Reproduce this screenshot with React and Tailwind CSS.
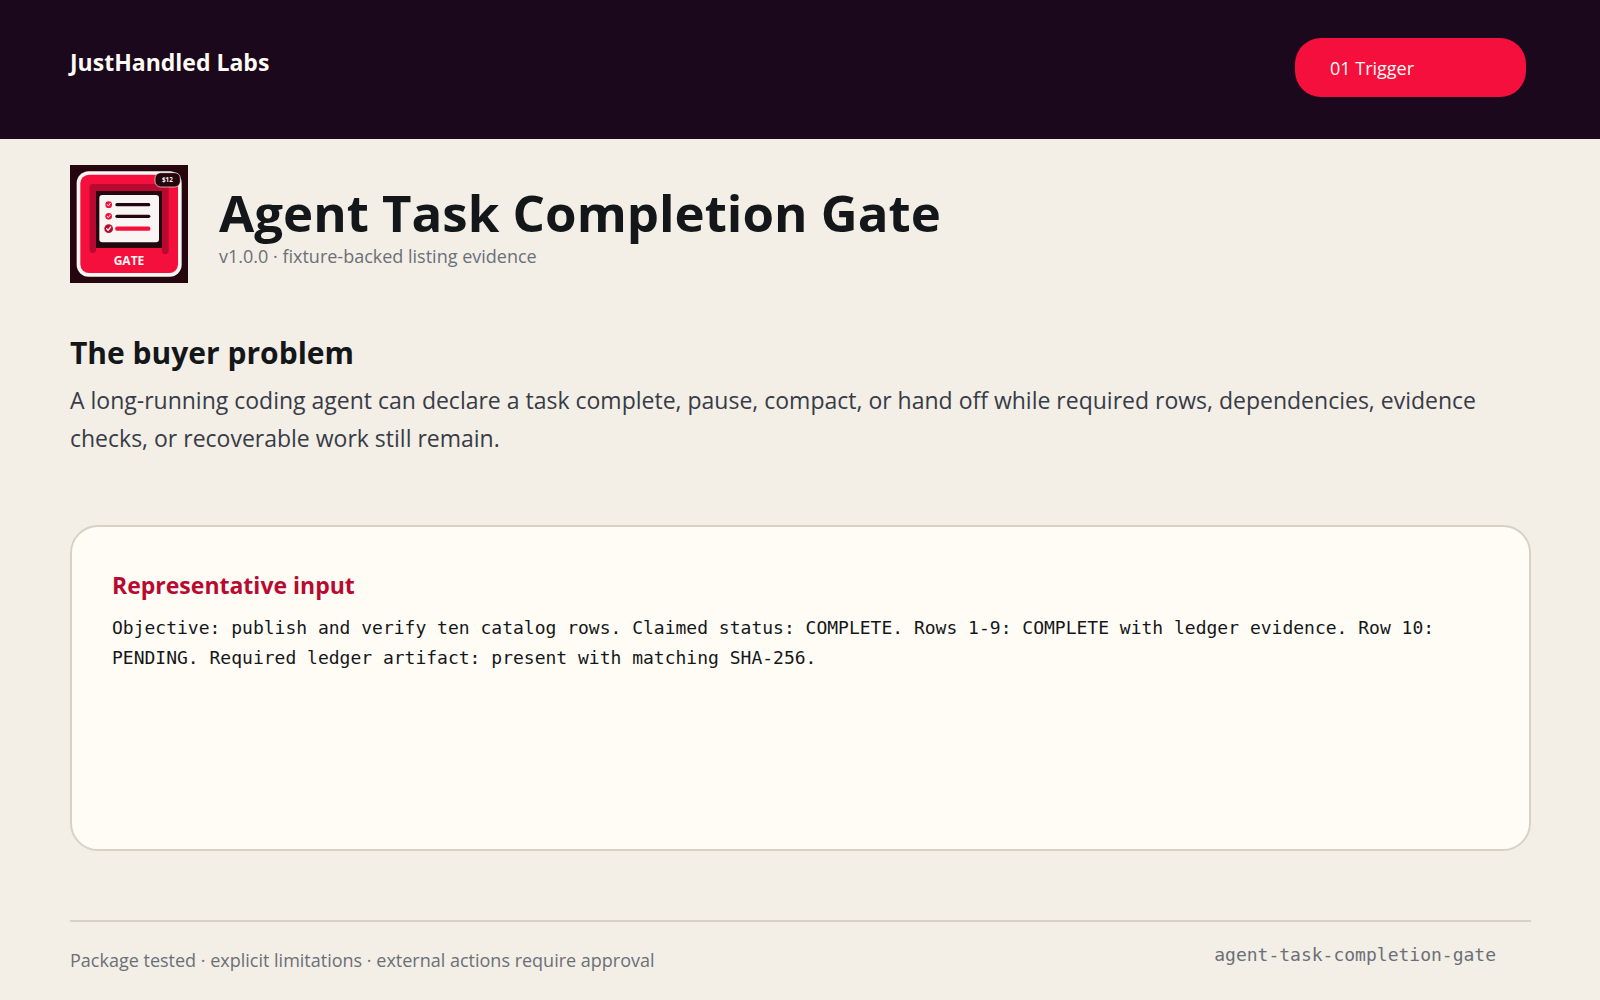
import React from 'react';

const GateLogo = () => (
  <svg viewBox="0 0 354 354" className="size-[118px] shrink-0" role="img" aria-label="Gate">
    <rect width="354" height="354" fill="#26060e" />
    <rect x="20" y="19" width="315" height="316" rx="36" fill="#f9f5f2" />
    <rect x="31" y="29" width="293" height="295" rx="26" fill="#f50f3c" />
    {/* gate frame */}
    <path d="M59 67 Q59 57 69 57 H286 Q296 57 296 67 V257 a10 10 0 0 1 -20 0 V78 H78 V257 a10 10 0 0 1 -19 0 Z" fill="#b80a30" />
    <rect x="78" y="78" width="198" height="171" fill="#26060e" />
    {/* checklist */}
    <rect x="88" y="90" width="179" height="142" rx="9" fill="#f9f5f2" />
    <circle cx="116" cy="119" r="10" fill="#f50f3c" />
    <circle cx="116" cy="154" r="10" fill="#f50f3c" />
    <circle cx="116" cy="191" r="13" fill="#b80a30" />
    <g fill="none" stroke="#f9f5f2" strokeWidth="3" strokeLinecap="round" strokeLinejoin="round">
      <path d="M112 119 l3 4 l6 -8" />
      <path d="M112 154 l3 4 l6 -8" />
      <path d="M110 191 l4 5 l8 -10" strokeWidth="4" />
    </g>
    <g strokeLinecap="round" strokeWidth="10">
      <path d="M141 119 H236" stroke="#26060e" />
      <path d="M141 154 H236" stroke="#26060e" />
      <path d="M142 191 H235" stroke="#f50f3c" strokeWidth="13" />
    </g>
    <text x="177" y="299" textAnchor="middle" fill="#f9f5f2" className="font-['Open_Sans',sans-serif] text-[36px] font-bold">GATE</text>
    {/* price tag */}
    <rect x="255" y="23" width="76" height="43" rx="17" fill="#26060e" stroke="#f9f5f2" strokeWidth="2" />
    <text x="292" y="50" textAnchor="middle" fill="#f9f5f2" className="font-['Open_Sans',sans-serif] text-[19px] font-bold">$12</text>
  </svg>
);

export default function App() {
  return (
    <div className="flex min-h-screen flex-col bg-[#f3eee6] font-['Open_Sans','Noto_Sans',sans-serif] text-[#14171a]">
      <header className="flex items-start justify-between bg-[#1b081d] pt-[38px] pr-[74px] pb-[42px] pl-[70px]">
        <p className="pt-2 text-[23px] leading-8 font-bold text-[#fffcf5]">JustHandled Labs</p>
        <button type="button" className="h-[59px] w-[231px] rounded-[26px] bg-[#f50f3c] px-[35px] text-left text-lg text-[#fffcf5]">
          01 Trigger
        </button>
      </header>

      <main className="flex grow flex-col pt-[26px] pr-[69px] pl-[70px]">
        <div className="flex items-center gap-[31px]">
          <GateLogo />
          <div className="pt-1">
            <h1 className="text-[51px] leading-[60px] font-bold">Agent Task Completion Gate</h1>
            <p className="text-lg leading-7 text-[#6b7078]">v1.0.0 · fixture-backed listing evidence</p>
          </div>
        </div>

        <section className="pt-[50px]">
          <h2 className="text-[30px] leading-10 font-bold">The buyer problem</h2>
          <p className="mt-2 text-[23px] leading-[38px] text-[#373c46]">
            A long-running coding agent can declare a task complete, pause, compact, or hand off while required rows, dependencies, evidence
            checks, or recoverable work still remain.
          </p>
        </section>

        <section className="mt-[68px] min-h-[326px] rounded-[28px] border-2 border-[#d9d1c4] bg-[#fffcf5] px-10 pt-[42px]">
          <h3 className="text-[23px] leading-8 font-bold text-[#b80a30]">Representative input</h3>
          <p className="mt-3 max-w-[1360px] font-['DejaVu_Sans_Mono',monospace] text-lg leading-[30px]">
            Objective: publish and verify ten catalog rows. Claimed status: COMPLETE. Rows 1-9: COMPLETE with ledger evidence. Row 10:
            PENDING. Required ledger artifact: present with matching SHA-256.
          </p>
        </section>
      </main>

      <footer className="mr-[69px] ml-[70px] flex items-start justify-between border-t-2 border-[#d9d1c4] pt-[19px] pr-[35px] pb-[26px] text-lg leading-7 text-[#6b7078]">
        <p className="pt-[5px]">Package tested · explicit limitations · external actions require approval</p>
        <p className="font-['DejaVu_Sans_Mono',monospace]">agent-task-completion-gate</p>
      </footer>
    </div>
  );
}
